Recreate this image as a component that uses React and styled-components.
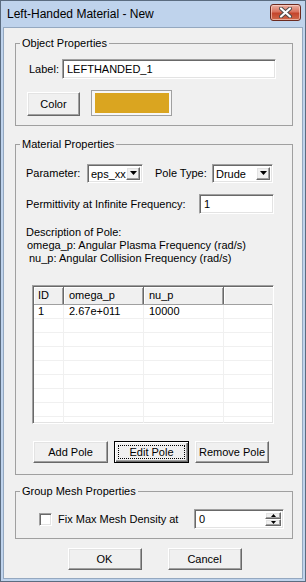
import React from 'react';
import styled, { createGlobalStyle, css } from 'styled-components';

const GlobalStyle = createGlobalStyle`
  html, body { margin: 0; padding: 0; background: #fff; }
  body { font-family: "Liberation Sans", Arial, sans-serif; font-size: 11px; color: #000; }
  * { box-sizing: border-box; }
`;

const sunken = css`
  background: #fff;
  border: 1px solid;
  border-color: #a0a0a0 #fff #fff #a0a0a0;
  box-shadow: inset 1px 1px 0 #696969, inset -1px -1px 0 #e3e3e3;
`;

const raised = css`
  background: #f0f0f0;
  border: 1px solid;
  border-color: #fff #696969 #696969 #fff;
  box-shadow: inset -1px -1px 0 #a0a0a0, inset 1px 1px 0 #e3e3e3;
`;

const Window = styled.div`
  width: 306px;
  height: 582px;
  border: 1px solid #5b6c80;
  background: #bfd3ec;
  padding: 0 3px 3px 3px;
  display: flex;
  flex-direction: column;
`;

const TitleBar = styled.div`
  height: 27px;
  flex: none;
  display: flex;
  justify-content: space-between;
  padding: 0 1px 0 3px;
`;

const Caption = styled.div`
  font-size: 12px;
  line-height: 27px;
  color: #000;
`;

const CloseBtn = styled.div`
  width: 31px;
  height: 17px;
  margin-top: 3px;
  border: 1px solid #6b2a20;
  border-radius: 3px;
  background: linear-gradient(#eab0a3 0%, #d9735f 45%, #c4452c 55%, #cf6a4c 100%);
  box-shadow: inset 0 0 0 1px rgba(255, 220, 210, 0.6);
  display: flex;
  align-items: center;
  justify-content: center;
`;

const Client = styled.div`
  flex: 1;
  background: #f0f0f0;
  box-shadow: 0 0 0 1px #94a8c0;
  padding: 0 9px 0 11px;
  display: flex;
  flex-direction: column;
`;

const Group = styled.fieldset`
  width: 278px;
  margin: ${p => p.$top}px 0 0 0;
  padding: 0;
  border: 1px solid #a0a0a0;
  min-width: 0;
`;

const Legend = styled.legend`
  margin-left: 4px;
  padding: 0 2px;
  line-height: 14px;
`;

const Body = styled.div`
  padding: ${p => p.$pad};
  display: flex;
  flex-direction: column;
`;

const Row = styled.div`
  display: flex;
  align-items: ${p => p.$align || 'center'};
  gap: ${p => p.$gap || 0}px;
  margin-top: ${p => p.$top || 0}px;
  margin-left: ${p => p.$left || 0}px;
  height: ${p => p.$h}px;
`;

const Text = styled.span`
  width: ${p => (p.$w ? `${p.$w}px` : 'auto')};
  margin-left: ${p => p.$left || 0}px;
  white-space: nowrap;
  flex: none;
`;

const TextBox = styled.div`
  ${sunken};
  width: ${p => p.$w}px;
  height: ${p => p.$h || 20}px;
  padding: 0 0 0 4px;
  line-height: 17px;
  display: flex;
  align-items: center;
  flex: none;
`;

const Button = styled.button`
  ${raised};
  width: ${p => p.$w}px;
  height: ${p => p.$h || 22}px;
  padding: 0;
  font: 11px "Liberation Sans", Arial, sans-serif;
  color: #000;
  flex: none;
  position: relative;
  ${p => p.$default && css`
    border-color: #000;
    box-shadow: inset 1px 1px 0 #fff, inset -1px -1px 0 #696969, inset -2px -2px 0 #a0a0a0;
    &::after {
      content: '';
      position: absolute;
      inset: 3px;
      border: 1px dotted #000;
    }
  `}
`;

const Swatch = styled.div`
  width: 81px;
  height: 26px;
  border: 1px solid #a0a0a0;
  padding: 2px 2px 2px 3px;
  background: #f7f7f7;
  flex: none;
`;

const SwatchFill = styled.div`
  width: 100%;
  height: 100%;
  background: ${p => p.$color};
`;

const Combo = styled.div`
  ${sunken};
  width: ${p => p.$w}px;
  height: 19px;
  display: flex;
  align-items: stretch;
  padding: 2px 2px 2px 2px;
  flex: none;
`;

const ComboText = styled.div`
  flex: 1;
  padding-left: 1px;
  line-height: 15px;
  overflow: hidden;
`;

const ArrowBtn = styled.div`
  ${raised};
  width: 14px;
  display: flex;
  align-items: center;
  justify-content: center;
`;

const Desc = styled.div`
  margin-top: 12px;
  line-height: 13px;
`;

const DescLine = styled.div`
  padding-left: ${p => p.$indent || 0}px;
  white-space: nowrap;
`;

const List = styled.div`
  ${sunken};
  width: 242px;
  height: 139px;
  margin: 20px 0 0 6px;
  padding: 1px;
  overflow: hidden;
`;

const ListHead = styled.div`
  display: flex;
  height: 18px;
  border-bottom: 1px solid #a0a0a0;
`;

const HeadCell = styled.div`
  width: ${p => p.$w}px;
  flex: none;
  background: #f0f0f0;
  border-right: ${p => (p.$last ? 'none' : '1px solid #696969')};
  box-shadow: inset 1px 1px 0 #fff, inset -1px 0 0 #a0a0a0;
  padding-left: ${p => p.$pad || 5}px;
  line-height: 17px;
`;

const ListRow = styled.div`
  display: flex;
  height: 14px;
  border-bottom: 1px solid #f0f0f0;
`;

const Cell = styled.div`
  width: ${p => p.$w}px;
  flex: none;
  border-right: 1px solid #f0f0f0;
  padding-left: ${p => p.$pad || 5}px;
  line-height: 13px;
  white-space: nowrap;
`;

const Check = styled.div`
  ${sunken};
  width: 13px;
  height: 13px;
  flex: none;
`;

const Spin = styled.div`
  ${sunken};
  width: 90px;
  height: 20px;
  display: flex;
  align-items: center;
  padding: 2px 2px 2px 4px;
`;

const SpinBtns = styled.div`
  width: 16px;
  height: 14px;
  margin-left: auto;
  display: flex;
  flex-direction: column;
`;

const SpinBtn = styled.div`
  ${raised};
  flex: 1;
  display: flex;
  align-items: center;
  justify-content: center;
`;

const Footer = styled.div`
  display: flex;
  justify-content: center;
  gap: 26px;
  margin-top: 9px;
  padding-left: 1px;
`;

const columns = [
  { key: 'id', title: 'ID', w: 30, pad: 4 },
  { key: 'w', title: 'omega_p', w: 80 },
  { key: 'n', title: 'nu_p', w: 80 },
  { key: 'x', title: '', w: 60, last: true },
];

const poles = [{ id: '1', w: '2.67e+011', n: '10000', x: '' }];

function DownArrow() {
  return (
    <svg width="7" height="4" viewBox="0 0 7 4">
      <path d="M0 0h7L3.5 4z" fill="#000" />
    </svg>
  );
}

function SpinArrow({ up }) {
  return (
    <svg width="5" height="3" viewBox="0 0 5 3">
      <path d={up ? 'M0 3h5L2.5 0z' : 'M0 0h5L2.5 3z'} fill="#000" />
    </svg>
  );
}

function ComboBox({ w, value }) {
  return (
    <Combo $w={w}>
      <ComboText>{value}</ComboText>
      <ArrowBtn><DownArrow /></ArrowBtn>
    </Combo>
  );
}

export default function App() {
  const rows = [...poles];
  while (rows.length < 9) rows.push({ id: '', w: '', n: '', x: '' });

  return (
    <>
      <GlobalStyle />
      <Window>
        <TitleBar>
          <Caption>Left-Handed Material - New</Caption>
          <CloseBtn>
            <svg width="13" height="11" viewBox="0 0 13 11">
              <path d="M2 1.5l9 8M11 1.5l-9 8" stroke="#4a4a4a" strokeWidth="4" strokeLinecap="round" />
              <path d="M2 1.5l9 8M11 1.5l-9 8" stroke="#fff" strokeWidth="2.2" strokeLinecap="round" />
            </svg>
          </CloseBtn>
        </TitleBar>

        <Client>
          <Group $top={8}>
            <Legend>Object Properties</Legend>
            <Body $pad="9px 0 9px 11px">
              <Row $h={20} $gap={3}>
                <Text $left={2}>Label:</Text>
                <TextBox $w={214}>LEFTHANDED_1</TextBox>
              </Row>
              <Row $h={26} $top={11} $gap={11} $align="flex-end">
                <Button $w={53} $h={24}>Color</Button>
                <Swatch><SwatchFill $color="#daa520" /></Swatch>
              </Row>
            </Body>
          </Group>

          <Group $top={11}>
            <Legend>Material Properties</Legend>
            <Body $pad="12px 0 11px 10px">
              <Row $h={20}>
                <Text $w={61}>Parameter:</Text>
                <ComboBox w={56} value="eps_xx" />
                <Text $w={57} $left={12}>Pole Type:</Text>
                <ComboBox w={61} value="Drude" />
              </Row>
              <Row $h={20} $top={11}>
                <Text $w={173}>Permittivity at Infinite Frequency:</Text>
                <TextBox $w={75}>1</TextBox>
              </Row>
              <Desc>
                <DescLine>Description of Pole:</DescLine>
                <DescLine $indent={1}>omega_p: Angular Plasma Frequency (rad/s)</DescLine>
                <DescLine $indent={3}>nu_p: Angular Collision Frequency (rad/s)</DescLine>
              </Desc>
              <List>
                <ListHead>
                  {columns.map(c => (
                    <HeadCell key={c.key} $w={c.w} $pad={c.pad} $last={c.last}>{c.title}</HeadCell>
                  ))}
                </ListHead>
                {rows.map((r, i) => (
                  <ListRow key={i}>
                    {columns.map(c => (
                      <Cell key={c.key} $w={c.w} $pad={c.pad}>{r[c.key]}</Cell>
                    ))}
                  </ListRow>
                ))}
              </List>
              <Row $h={22} $top={17} $left={7} $gap={6}>
                <Button $w={75}>Add Pole</Button>
                <Button $w={75} $default>Edit Pole</Button>
                <Button $w={74}>Remove Pole</Button>
              </Row>
            </Body>
          </Group>

          <Group $top={9}>
            <Legend>Group Mesh Properties</Legend>
            <Body $pad="11px 0 9px 23px">
              <Row $h={20} $gap={6}>
                <Check />
                <Text $w={130}>Fix Max Mesh Density at</Text>
                <Spin>
                  <span>0</span>
                  <SpinBtns>
                    <SpinBtn><SpinArrow up /></SpinBtn>
                    <SpinBtn><SpinArrow /></SpinBtn>
                  </SpinBtns>
                </Spin>
              </Row>
            </Body>
          </Group>

          <Footer>
            <Button $w={74}>OK</Button>
            <Button $w={74}>Cancel</Button>
          </Footer>
        </Client>
      </Window>
    </>
  );
}
